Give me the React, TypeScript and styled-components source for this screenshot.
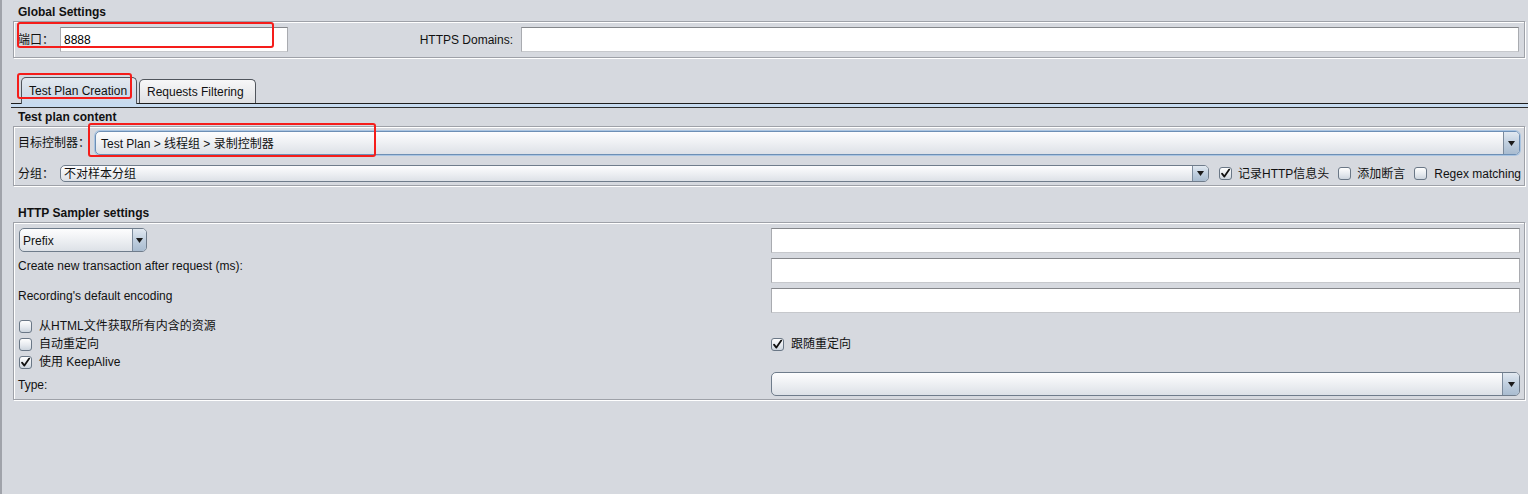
import React from "react";
import styled, { createGlobalStyle, css } from "styled-components";

const GlobalStyle = createGlobalStyle`
  html, body { margin: 0; padding: 0; background: #d6d9df; }
  body {
    font-family: "Liberation Sans", "Noto Sans CJK SC", Arial, sans-serif;
    font-size: 12px;
    color: #000;
  }
  * { box-sizing: border-box; }
`;

const Page = styled.div`
  position: relative;
  width: 1528px;
  height: 494px;
  background: #d6d9df;
  border-left: 2px solid #a0a3aa;
  display: flex;
  flex-direction: column;
  overflow: hidden;
`;

const SectionTitle = styled.div<{ $h: number }>`
  height: ${(p) => p.$h}px;
  display: flex;
  align-items: flex-end;
  padding: 0 0 2px 16px;
  font-weight: bold;
  font-size: 12px;
  line-height: 14px;
  color: #111;
  white-space: nowrap;
`;

const Panel = styled.div<{ $h: number; $pad: string }>`
  margin-left: 11px;
  width: 1512px;
  height: ${(p) => p.$h}px;
  padding: ${(p) => p.$pad};
  border: 1px solid #9ea1a8;
  box-shadow: inset 1px 1px 0 #fff, 1px 1px 0 #fff;
  display: flex;
  flex-direction: column;
`;

const FieldRow = styled.div<{ $h: number; $mt?: number; $mr?: number }>`
  display: flex;
  align-items: center;
  height: ${(p) => p.$h}px;
  margin-top: ${(p) => p.$mt ?? 0}px;
  margin-right: ${(p) => p.$mr ?? 0}px;
`;

const Label = styled.span<{ $w?: number; $right?: boolean; $pt?: number }>`
  flex: none;
  width: ${(p) => (p.$w ? `${p.$w}px` : "auto")};
  text-align: ${(p) => (p.$right ? "right" : "left")};
  padding-right: ${(p) => (p.$right ? 8 : 0)}px;
  padding-top: ${(p) => p.$pt ?? 0}px;
  line-height: 14px;
  white-space: nowrap;
  color: #111;
`;

const TextField = styled.div<{ $w?: number }>`
  height: 25px;
  flex: ${(p) => (p.$w ? "none" : "1")};
  width: ${(p) => (p.$w ? `${p.$w}px` : "auto")};
  background: #fff;
  border: 1px solid #a9abb0;
  border-top-color: #85878b;
  border-bottom-color: #c6c8cc;
  display: flex;
  align-items: center;
  padding: 1px 0 0 3px;
  color: #000;
  line-height: 14px;
`;

const TabArea = styled.div`
  margin-left: 9px;
  display: flex;
  flex-direction: column;
`;

const TabRow = styled.div`
  height: 46px;
  display: flex;
  align-items: flex-end;
  gap: 2px;
  padding-left: 10px;
  border-bottom: 1px solid #1d1d1d;
`;

const Tab = styled.div<{ $active?: boolean; $w: number }>`
  width: ${(p) => p.$w}px;
  height: ${(p) => (p.$active ? 27 : 24)}px;
  margin-bottom: ${(p) => (p.$active ? -1 : 0)}px;
  border: 1px solid #50555c;
  border-bottom: none;
  border-radius: 5px 5px 0 0;
  padding: 0 0 ${(p) => (p.$active ? 1 : 0)}px 7px;
  display: flex;
  align-items: center;
  white-space: nowrap;
  line-height: 14px;
  color: #111;
  background: ${(p) =>
    p.$active
      ? "linear-gradient(#e3e9f0, #d3dde8 55%, #c7daee)"
      : "linear-gradient(#f7f7f8, #e9eaec 60%, #dfe0e3)"};
`;

const TabBand = styled.div`
  height: 4px;
  background: #c7dbf0;
  border-bottom: 1px solid #2e2e2e;
`;

const Combo = styled.div<{ $h: number; $w?: number; $focus?: boolean; $ml?: number }>`
  height: ${(p) => p.$h}px;
  flex: ${(p) => (p.$w ? "none" : "1")};
  width: ${(p) => (p.$w ? `${p.$w}px` : "auto")};
  margin-left: ${(p) => p.$ml ?? 0}px;
  min-width: 0;
  display: flex;
  border: 1px solid #6f7c8b;
  border-radius: 5px;
  overflow: hidden;
  background: linear-gradient(#fdfdfe, #eff1f4 45%, #dde1e7);
  ${(p) =>
    p.$focus &&
    css`
      border-color: #6d8fb5;
      box-shadow: 0 0 0 1px #aac5e2;
    `}
`;

const ComboText = styled.span<{ $pl: number }>`
  flex: 1;
  display: flex;
  align-items: center;
  padding: 1px 0 0 ${(p) => p.$pl}px;
  white-space: nowrap;
  line-height: 14px;
  color: #111;
  overflow: hidden;
`;

const ComboButton = styled.span<{ $w: number }>`
  flex: none;
  width: ${(p) => p.$w}px;
  border-left: 1px solid #7c8b9c;
  background: linear-gradient(#e2e9f1, #c0cfdf 50%, #a9bcd0);
  display: flex;
  align-items: center;
  justify-content: center;
`;

const CheckGroup = styled.div`
  flex: none;
  width: 312px;
  padding-left: 10px;
  display: flex;
  justify-content: space-between;
  align-items: center;
`;

const CheckItem = styled.span<{ $gap: number; $ml?: number }>`
  display: flex;
  align-items: center;
  gap: ${(p) => p.$gap}px;
  margin-left: ${(p) => p.$ml ?? 0}px;
  white-space: nowrap;
  line-height: 14px;
  color: #111;
`;

const Box = styled.span`
  flex: none;
  width: 13px;
  height: 13px;
  border: 1px solid #6a7786;
  border-radius: 3px;
  background: linear-gradient(#fefefe, #e6eaef 55%, #cdd5de);
  display: flex;
  align-items: center;
  justify-content: center;
`;

const SRow = styled.div<{ $h: number; $mt?: number }>`
  display: grid;
  grid-template-columns: 1fr 749px;
  height: ${(p) => p.$h}px;
  margin-top: ${(p) => p.$mt ?? 0}px;
`;

const Cell = styled.div<{ $align?: string }>`
  display: flex;
  align-items: ${(p) => p.$align ?? "center"};
  min-width: 0;
`;

const Annotation = styled.div<{ $x: number; $y: number; $w: number; $h: number }>`
  position: absolute;
  left: ${(p) => p.$x}px;
  top: ${(p) => p.$y}px;
  width: ${(p) => p.$w}px;
  height: ${(p) => p.$h}px;
  border: 2px solid #f51d1a;
  border-radius: 3px;
  pointer-events: none;
`;

const Arrow = () => (
  <svg width="7" height="5" viewBox="0 0 7 5">
    <polygon points="0,0 7,0 3.5,5" fill="#1b1b1b" />
  </svg>
);

const CheckBox = ({ checked }: { checked?: boolean }) => (
  <Box>
    {checked && (
      <svg width="11" height="11" viewBox="0 0 11 11">
        <path d="M2 5.6 L4.4 8.6 L9.2 1.6" fill="none" stroke="#111" strokeWidth="1.8" strokeLinecap="round" strokeLinejoin="round" />
      </svg>
    )}
  </Box>
);

type ComboProps = { h: number; w?: number; btn: number; pl: number; text?: string; focus?: boolean; ml?: number };
const ComboBox = ({ h, w, btn, pl, text, focus, ml }: ComboProps) => (
  <Combo $h={h} $w={w} $focus={focus} $ml={ml}>
    <ComboText $pl={pl}>{text}</ComboText>
    <ComboButton $w={btn}>
      <Arrow />
    </ComboButton>
  </Combo>
);

export default function App() {
  return (
    <>
      <GlobalStyle />
      <Page>
        <SectionTitle $h={21}>Global Settings</SectionTitle>
        <Panel $h={37} $pad="5px 5px 5px 4px">
          <FieldRow $h={25}>
            <Label $w={42}>端口：</Label>
            <TextField $w={228}>8888</TextField>
            <Label $w={233} $right>HTTPS Domains:</Label>
            <TextField />
          </FieldRow>
        </Panel>

        <TabArea>
          <TabRow>
            <Tab $active $w={116}>Test Plan Creation</Tab>
            <Tab $w={117}>Requests Filtering</Tab>
          </TabRow>
          <TabBand />
        </TabArea>

        <SectionTitle $h={18}>Test plan content</SectionTitle>
        <Panel $h={60} $pad="4px 3px 3px 4px">
          <FieldRow $h={24} $mr={1}>
            <Label $w={77}>目标控制器：</Label>
            <ComboBox h={24} btn={16} pl={5} focus text="Test Plan > 线程组 > 录制控制器" />
          </FieldRow>
          <FieldRow $h={17} $mt={10}>
            <Label $w={42}>分组：</Label>
            <ComboBox h={17} btn={16} pl={3} text="不对样本分组" />
            <CheckGroup>
              <CheckItem $gap={6}>
                <CheckBox checked />
                记录HTTP信息头
              </CheckItem>
              <CheckItem $gap={6}>
                <CheckBox />
                添加断言
              </CheckItem>
              <CheckItem $gap={7}>
                <CheckBox />
                Regex matching
              </CheckItem>
            </CheckGroup>
          </FieldRow>
        </Panel>

        <SectionTitle $h={36}>HTTP Sampler settings</SectionTitle>
        <Panel $h={178} $pad="5px 4px 3px 4px">
          <SRow $h={25}>
            <Cell $align="flex-start">
              <ComboBox h={24} w={128} btn={14} pl={3} ml={1} text="Prefix" />
            </Cell>
            <Cell>
              <TextField />
            </Cell>
          </SRow>
          <SRow $h={25} $mt={5}>
            <Cell $align="flex-start">
              <Label $pt={1}>Create new transaction after request (ms):</Label>
            </Cell>
            <Cell>
              <TextField />
            </Cell>
          </SRow>
          <SRow $h={25} $mt={5}>
            <Cell $align="flex-start">
              <Label $pt={1}>Recording's default encoding</Label>
            </Cell>
            <Cell>
              <TextField />
            </Cell>
          </SRow>
          <SRow $h={18} $mt={4}>
            <Cell>
              <CheckItem $gap={7} $ml={1}>
                <CheckBox />
                从HTML文件获取所有内含的资源
              </CheckItem>
            </Cell>
            <Cell />
          </SRow>
          <SRow $h={18}>
            <Cell>
              <CheckItem $gap={7} $ml={1}>
                <CheckBox />
                自动重定向
              </CheckItem>
            </Cell>
            <Cell>
              <CheckItem $gap={7}>
                <CheckBox checked />
                跟随重定向
              </CheckItem>
            </Cell>
          </SRow>
          <SRow $h={18}>
            <Cell>
              <CheckItem $gap={7} $ml={1}>
                <CheckBox checked />
                使用 KeepAlive
              </CheckItem>
            </Cell>
            <Cell />
          </SRow>
          <SRow $h={24} $mt={1}>
            <Cell>
              <Label $pt={1}>Type:</Label>
            </Cell>
            <Cell>
              <ComboBox h={24} btn={17} pl={4} />
            </Cell>
          </SRow>
        </Panel>

        <Annotation $x={15} $y={22} $w={257} $h={26} />
        <Annotation $x={15} $y={73} $w={115} $h={26} />
        <Annotation $x={86} $y={123} $w={288} $h={34} />
      </Page>
    </>
  );
}
